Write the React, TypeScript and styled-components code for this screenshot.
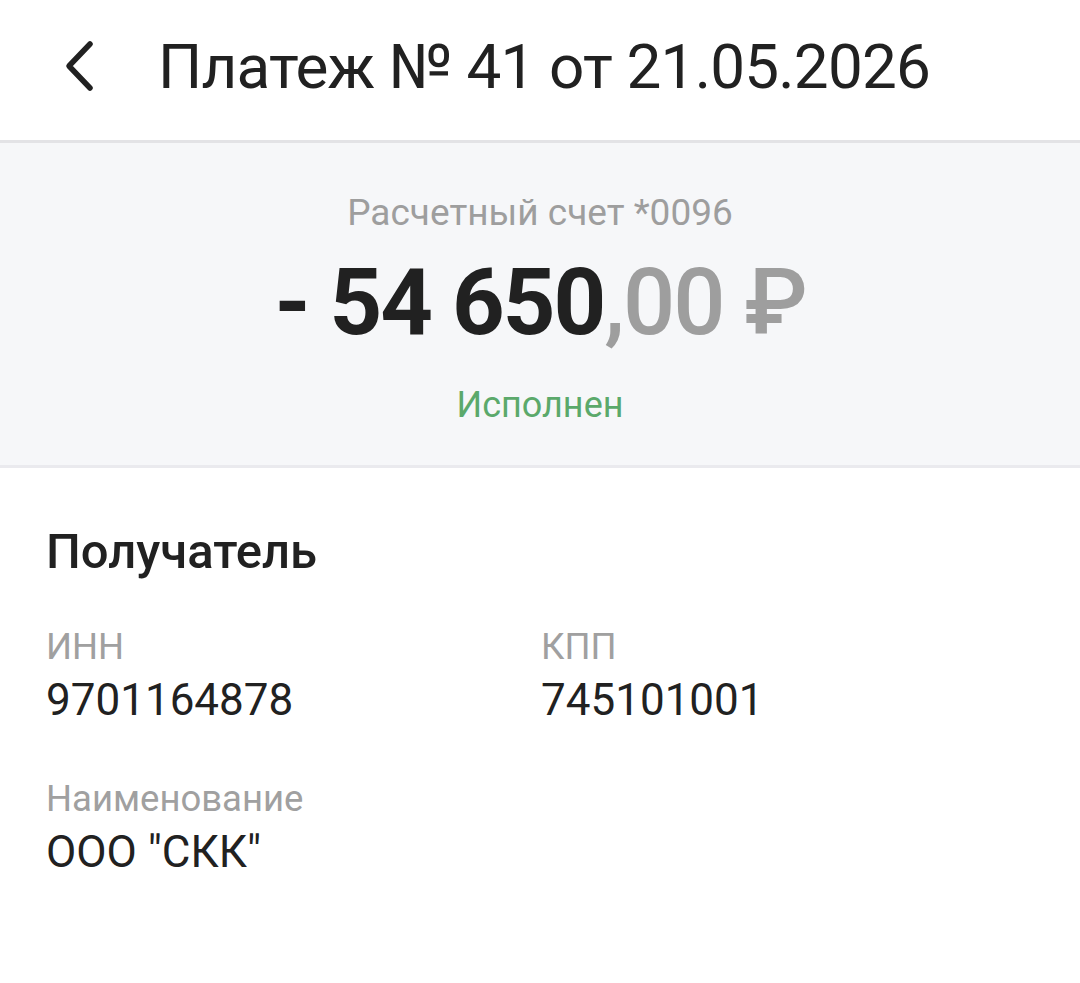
import React from 'react';
import styled, { createGlobalStyle } from 'styled-components';

const GlobalStyle = createGlobalStyle`
    html, body {
        margin:0;
        padding:0;
        background:#ffffff;
        font-family:Roboto, "Noto Sans", sans-serif;
        color:#212121;
    }
`

const Page = styled.div`
    width:1080px;
    min-height:983px;
    background:#ffffff;
`
const Header = styled.header`
    height:140px;
    display:flex;
    align-items:center;
    padding-left:60px;
    padding-bottom:8px;
    box-sizing:border-box;
`
const BackButton = styled.button`
    width:36px;
    height:56px;
    padding:0;
    border:none;
    background:none;
    display:flex;
    align-items:center;
    cursor:pointer;
    margin-right:62px;
`
const Title = styled.h1`
    margin:0;
    font-size:62px;
    font-weight:400;
    color:#212121;
    letter-spacing:-0.8px;
    white-space:nowrap;
`
const Summary = styled.section`
    background:#f6f7f9;
    border-top:3px solid #e3e3e6;
    border-bottom:3px solid #eaeaee;
    height:328px;
    box-sizing:border-box;
    display:flex;
    flex-direction:column;
    align-items:center;
    padding-top:48px;
`
const Account = styled.div`
    font-size:37px;
    color:#9e9e9e;
    line-height:44px;
`
const Amount = styled.div`
    font-size:92px;
    font-weight:700;
    line-height:110px;
    margin-top:13px;
    color:#212121;
    letter-spacing:-2px;
    white-space:nowrap;
`
const Fraction = styled.span`
    color:#9e9e9e;
    font-weight:500;
`
const Status = styled.div`
    font-size:36px;
    color:#5ba96b;
    line-height:44px;
    margin-top:25px;
`
const Details = styled.section`
    padding:54px 46px 0;
`
const SectionTitle = styled.h2`
    margin:0 0 42px;
    font-size:49px;
    font-weight:500;
    line-height:60px;
    color:#212121;
`
const FieldGrid = styled.div`
    display:grid;
    grid-template-columns:495px 1fr;
    row-gap:46px;
`
const Field = styled.div`
    display:flex;
    flex-direction:column;
`
const Label = styled.div`
    font-size:36.5px;
    color:#a0a0a0;
    line-height:46px;
`
const Value = styled.div`
    font-size:44px;
    color:#212121;
    line-height:60px;
`

const ChevronLeft: React.FC = () => (
    <svg width="36" height="56" viewBox="0 0 36 56" fill="none">
        <path d="M30 6 L9 28 L30 50" stroke="#212121" strokeWidth="5.5" strokeLinecap="round" strokeLinejoin="round" />
    </svg>
)

export default function App(): JSX.Element {
    return (
        <Page>
            <GlobalStyle />
            <Header>
                <BackButton aria-label="Назад">
                    <ChevronLeft />
                </BackButton>
                <Title>Платеж № 41 от 21.05.2026</Title>
            </Header>
            <Summary>
                <Account>Расчетный счет *0096</Account>
                <Amount>- 54 650<Fraction>,00 ₽</Fraction></Amount>
                <Status>Исполнен</Status>
            </Summary>
            <Details>
                <SectionTitle>Получатель</SectionTitle>
                <FieldGrid>
                    <Field>
                        <Label>ИНН</Label>
                        <Value>9701164878</Value>
                    </Field>
                    <Field>
                        <Label>КПП</Label>
                        <Value>745101001</Value>
                    </Field>
                    <Field>
                        <Label>Наименование</Label>
                        <Value>ООО "СКК"</Value>
                    </Field>
                </FieldGrid>
            </Details>
        </Page>
    )
}
